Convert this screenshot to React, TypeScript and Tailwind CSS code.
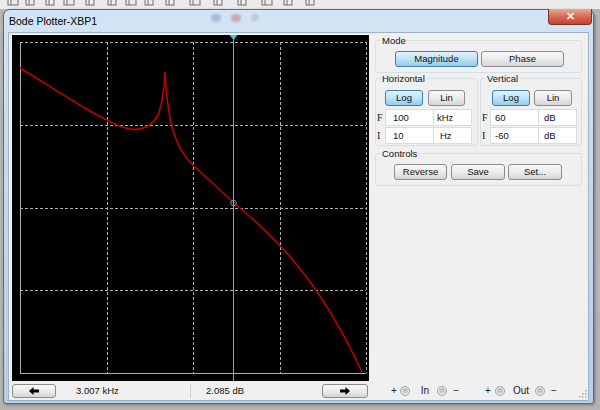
import { clsx } from "clsx";
import type { ReactNode } from "react";

const sans = "font-['Liberation_Sans',Arial,sans-serif]";

function Btn({ children, active = false, className }: { children: ReactNode; active?: boolean; className?: string }) {
  return (
    <div
      className={clsx(
        "flex shrink-0 items-center justify-center rounded-[3px] border text-[9.5px] leading-none text-[#111]",
        active
          ? "border-[#3c7fb1] bg-linear-to-b from-[#e3f3fc] via-[#bde3f8] to-[#94ccec]"
          : "border-[#8c8c8c] bg-linear-to-b from-[#f8f8f8] via-[#ececec] to-[#d5d5d5]",
        className
      )}
    >
      {children}
    </div>
  );
}

function Arrow({ right = false }: { right?: boolean }) {
  return (
    <svg width="10" height="8" viewBox="0 0 10 8" className={right ? "rotate-180" : ""}>
      <path d="M0 4 L4.5 0 V2.5 H10 V5.5 H4.5 V8 Z" fill="#000" />
    </svg>
  );
}

function Jack() {
  return (
    <span className="flex h-[10px] w-[10px] shrink-0 items-center justify-center rounded-full border border-[#a2a2a2] bg-[#ececec]">
      <span className="h-[6px] w-[6px] rounded-full bg-linear-to-b from-[#b4b4b4] to-[#d8d8d8]" />
    </span>
  );
}

function Field({ label, value, unit, valuePad, unitPad }: { label: string; value: string; unit: string; valuePad: string; unitPad: string }) {
  return (
    <div className="flex h-[17px] items-center">
      <span className="w-[8px] font-['Liberation_Serif',serif] text-[10px] leading-none">{label}</span>
      <div className={clsx("flex h-full w-[49px] items-center border border-[#dcdcdc] bg-white", valuePad)}>{value}</div>
      <div className={clsx("flex h-full w-[38px] items-center border border-l-0 border-[#dcdcdc] bg-white", unitPad)}>{unit}</div>
    </div>
  );
}

function Plot() {
  const xs = [94.5, 181, 267.5];
  const ys = [89.75, 172.5, 255.25];
  return (
    <div className="h-[346px] w-[357px] bg-black">
      <svg width="357" height="346" viewBox="0 0 357 346">
        <g stroke="#b0b0b0" strokeWidth="1" fill="none">
          <line x1="8.5" y1="7" x2="8.5" y2="338" />
          <line x1="8" y1="338.5" x2="354" y2="338.5" />
          <line x1="8" y1="7.5" x2="354" y2="7.5" strokeDasharray="3 2" />
          <line x1="354.5" y1="7" x2="354.5" y2="338" strokeDasharray="3 2" />
          {xs.map((x) => (
            <line key={x} x1={Math.round(x) + 0.5} y1="7" x2={Math.round(x) + 0.5} y2="338" strokeDasharray="3 2" />
          ))}
          {ys.map((y) => (
            <line key={y} x1="8" y1={Math.round(y) + 0.5} x2="354" y2={Math.round(y) + 0.5} strokeDasharray="3 2" />
          ))}
        </g>
        <path
          d="M8,33 C40,52 80,80 110,92 C125,97 138,94 146,80 C150,70 152,55 153,37 C154,55 156,76 160,92 C166,112 172,122 182,131 L221,167 C262,202 305,240 350,337"
          stroke="#c00000"
          strokeWidth="1.6"
          fill="none"
        />
        <line x1="221.5" y1="0" x2="221.5" y2="346" stroke="#33ccd6" strokeWidth="1" />
        <polygon points="217.5,0 225.5,0 221.5,5" fill="#33ccd6" />
        <circle cx="221.5" cy="168" r="2.8" stroke="#3aa8c0" strokeWidth="1" fill="none" />
      </svg>
    </div>
  );
}

function Toolbar() {
  const icons = [8, 26, 46, 64, 86, 108, 126, 145, 166, 190, 214, 238, 262, 284, 306];
  return (
    <div className="h-[9px] w-full bg-[#ebebeb]">
      <svg width="600" height="9" viewBox="0 0 600 9">
        {icons.map((x, i) => (
          <g key={x} stroke="#707070" fill="none" strokeWidth="1">
            <rect x={x} y="-3" width={i % 3 === 0 ? 10 : 8} height="8" />
            <line x1={x + 3} y1="0" x2={x + 3} y2="5" />
          </g>
        ))}
      </svg>
    </div>
  );
}

export default function App() {
  return (
    <div className={clsx("relative h-[410px] w-[600px] overflow-hidden bg-[#b4b4b4] text-[#111]", sans)}>
      <Toolbar />
      <div className="ml-[3px] flex h-[395px] w-[591px] flex-col rounded-t-[7px] rounded-b-[3px] border border-[#5b6b80] bg-linear-to-b from-[#d3e4f4] via-[#c3d8ee] to-[#b6cee8] shadow-[1px_1px_3px_rgba(0,0,0,0.35)]">
        {/* title bar */}
        <div className="flex h-[23px] items-start">
          <div className="pl-[5px] pt-[5px] text-[10.5px] leading-[12px] text-black">Bode Plotter-XBP1</div>
          <div className="ml-[114px] mt-[4px] flex gap-[10px] opacity-60 blur-[1px]">
            <span className="h-[8px] w-[10px] rounded-full bg-[#8aa6c8]" />
            <span className="h-[8px] w-[10px] rounded-full bg-[#c88090]" />
            <span className="h-[7px] w-[8px] rounded-full bg-[#a8b8c8]" />
          </div>
          <div className="-mt-[1px] ml-auto mr-[1px] flex h-[16px] w-[44px] items-center justify-center rounded-b-[4px] border border-t-0 border-[#7a3328] bg-linear-to-b from-[#eaa898] via-[#d66a54] to-[#c4432c]">
            <span className="text-[11px] font-bold leading-none text-[#f4f4f4]">✕</span>
          </div>
        </div>

        {/* client */}
        <div className="mx-[5px] flex h-[367px] bg-[#f0f0f0] ring-1 ring-[#9db2c8]">
          {/* left column */}
          <div className="ml-[3px] mt-[2px] flex w-[357px] flex-col">
            <Plot />
            <div className="mt-[3px] flex h-[14px] items-stretch text-[9.5px] leading-none">
              <Btn className="w-[44px]">
                <Arrow />
              </Btn>
              <div className="ml-[1px] flex w-[264px] items-center">
                <span className="flex h-full w-[134px] items-center border-r border-[#cfcfcf] pl-[19px]">3.007 kHz</span>
                <span className="pl-[15px]">2.085 dB</span>
              </div>
              <Btn className="ml-[1px] w-[46px]">
                <Arrow right />
              </Btn>
            </div>
          </div>

          {/* right panel */}
          <div className="ml-[3px] flex w-[216px] flex-col pt-[2px] text-[9.5px]">
            <fieldset className="ml-[3px] h-[38px] w-[207px] rounded-[3px] border border-[#d5dfe5] pb-[6px] pl-[19px]">
              <legend className="-ml-[14px] px-[1px] leading-[11px]">Mode</legend>
              <div className="mt-[5px] flex gap-[3px]">
                <Btn active className="h-[16px] w-[83px]">Magnitude</Btn>
                <Btn className="h-[16px] w-[83px]">Phase</Btn>
              </div>
            </fieldset>

            <div className="ml-[3px] flex w-[207px] gap-[2px]">
              <fieldset className="h-[73px] w-[103px] rounded-[3px] border border-[#d5dfe5] pl-[1px]">
                <legend className="ml-[4px] px-[1px] leading-[11px]">Horizontal</legend>
                <div className="mt-[6px] flex gap-[5px] pl-[8px]">
                  <Btn active className="h-[16px] w-[38px]">Log</Btn>
                  <Btn className="h-[16px] w-[37px]">Lin</Btn>
                </div>
                <div className="mt-[3px] flex flex-col gap-[1px] leading-none">
                  <Field label="F" value="100" unit="kHz" valuePad="pl-[7px]" unitPad="pl-[3px]" />
                  <Field label="I" value="10" unit="Hz" valuePad="pl-[7px]" unitPad="pl-[6px]" />
                </div>
              </fieldset>
              <fieldset className="h-[73px] w-[102px] rounded-[3px] border border-[#d5dfe5] pl-[1px]">
                <legend className="ml-[4px] px-[1px] leading-[11px]">Vertical</legend>
                <div className="mt-[6px] flex gap-[4px] pl-[10px]">
                  <Btn active className="h-[16px] w-[38px]">Log</Btn>
                  <Btn className="h-[16px] w-[38px]">Lin</Btn>
                </div>
                <div className="mt-[3px] flex flex-col gap-[1px] leading-none">
                  <Field label="F" value="60" unit="dB" valuePad="pl-[4px]" unitPad="pl-[5px]" />
                  <Field label="I" value="-60" unit="dB" valuePad="pl-[4px]" unitPad="pl-[5px]" />
                </div>
              </fieldset>
            </div>

            <fieldset className="ml-[3px] mt-[2px] h-[38px] w-[207px] rounded-[3px] border border-[#d5dfe5] pl-[18px]">
              <legend className="-ml-[13px] px-[1px] leading-[11px]">Controls</legend>
              <div className="mt-[5px] flex">
                <Btn className="h-[16px] w-[53px]">Reverse</Btn>
                <Btn className="ml-[4px] h-[16px] w-[54px]">Save</Btn>
                <Btn className="ml-[3px] h-[16px] w-[54px]">Set...</Btn>
              </div>
            </fieldset>

            <div className="mb-[2px] mt-auto flex h-[15px] items-center pl-[19px] text-[10px] leading-none text-[#222]">
              <span>+</span>
              <span className="ml-[3px]"><Jack /></span>
              <span className="ml-[11px]">In</span>
              <span className="ml-[8px]"><Jack /></span>
              <span className="ml-[6px]">−</span>
              <span className="ml-[26px]">+</span>
              <span className="ml-[4px]"><Jack /></span>
              <span className="ml-[8px]">Out</span>
              <span className="ml-[6px]"><Jack /></span>
              <span className="ml-[6px]">−</span>
              <svg width="9" height="9" viewBox="0 0 9 9" className="ml-auto mr-[1px] self-end">
                <g fill="#a8a8a8">
                  <rect x="7" y="1" width="1.5" height="1.5" />
                  <rect x="4" y="4" width="1.5" height="1.5" />
                  <rect x="7" y="4" width="1.5" height="1.5" />
                  <rect x="1" y="7" width="1.5" height="1.5" />
                  <rect x="4" y="7" width="1.5" height="1.5" />
                  <rect x="7" y="7" width="1.5" height="1.5" />
                </g>
              </svg>
            </div>
          </div>
        </div>
      </div>
    </div>
  );
}
